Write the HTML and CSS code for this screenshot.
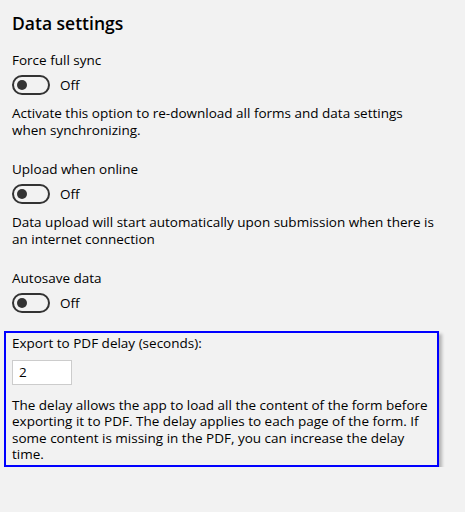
FILE: index.html
```html
<!DOCTYPE html>
<html lang="en">
<head>
  <meta charset="UTF-8" />
  <meta name="viewport" content="width=device-width, initial-scale=1" />
  <title>Data settings</title>
  <link rel="stylesheet" href="styles.css">
</head>
<body>
  <main class="settings">
    <h1>Data settings</h1>

    <section class="setting">
      <div class="setting-label">Force full sync</div>
      <div class="toggle-row">
        <span class="toggle"><span class="toggle-thumb"></span></span>
        <span class="toggle-state">Off</span>
      </div>
      <p class="setting-desc">Activate this option to re-download all forms and data settings when synchronizing.</p>
    </section>

    <section class="setting">
      <div class="setting-label">Upload when online</div>
      <div class="toggle-row">
        <span class="toggle"><span class="toggle-thumb"></span></span>
        <span class="toggle-state">Off</span>
      </div>
      <p class="setting-desc">Data upload will start automatically upon submission when there is an internet connection</p>
    </section>

    <section class="setting">
      <div class="setting-label">Autosave data</div>
      <div class="toggle-row">
        <span class="toggle"><span class="toggle-thumb"></span></span>
        <span class="toggle-state">Off</span>
      </div>
    </section>

    <section class="setting highlight">
      <label class="setting-label" for="pdfDelay">Export to PDF delay (seconds):</label>
      <input class="num-input" id="pdfDelay" type="text" value="2" />
      <p class="setting-desc">The delay allows the app to load all the content of the form before exporting it to PDF. The delay applies to each page of the form. If some content is missing in the PDF, you can increase the delay time.</p>
    </section>
  </main>
</body>
</html>
```

FILE: styles.css
```css
/* Reset */
*, *::before, *::after {
  box-sizing: border-box;
}
body {
  margin: 0;
  background-color: #f2f2f2;
  color: #000;
  font-family: 'Open Sans', 'Noto Sans', sans-serif;
  font-size: 13.5px;
  line-height: 17px;
}
.settings {
  padding: 9px 28px 0 12px;
}
h1 {
  font-size: 17.5px;
  font-weight: 600;
  line-height: 28px;
  margin: 0 0 15px;
}
.setting {
  margin-bottom: 22px;
}
.setting:nth-of-type(3) {
  margin-bottom: 18px;
}
.setting-label {
  display: block;
}
.toggle-row {
  display: flex;
  align-items: center;
  gap: 10px;
  margin-top: 6px;
  height: 20px;
}
.toggle {
  width: 38px;
  height: 20px;
  border: 2px solid #333;
  border-radius: 10px;
  display: flex;
  align-items: center;
  padding-left: 3px;
}
.toggle-thumb {
  width: 10px;
  height: 10px;
  border-radius: 50%;
  background: #333;
}
.setting-desc {
  margin: 10px 0 0;
}
.highlight {
  margin: 0 -2px 0 -8px;
  padding: 2px 6px 2px;
  border: 2px solid #0000ff;
  box-shadow: 3px 3px 3px rgba(0,0,0,0.25);
  line-height: 16.5px;
}
.highlight .setting-desc {
  margin-top: 12px;
}
.num-input {
  display: block;
  width: 60px;
  height: 25px;
  margin-top: 8px;
  padding: 0 6px;
  border: 1px solid #ccc;
  background: #fff;
  font: inherit;
  color: #000;
}
```
